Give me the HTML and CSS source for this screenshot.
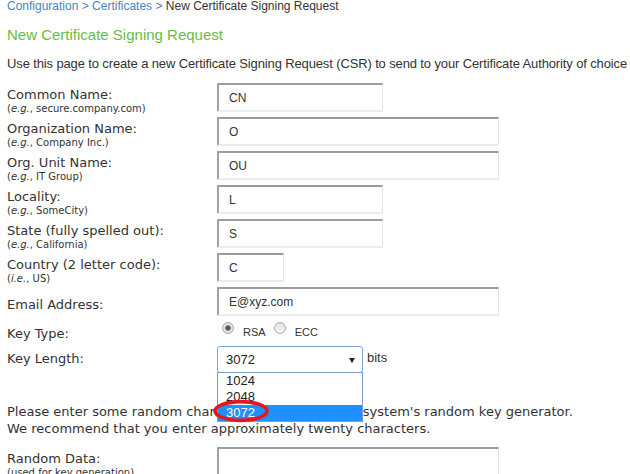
FILE: index.html
```html
<!DOCTYPE html>
<html lang="en">
<head>
<meta charset="utf-8">
<title>New Certificate Signing Request</title>
<link rel="stylesheet" href="styles.css">
</head>
<body>
<div class="page">
  <div class="crumb"><a class="crumb-link">Configuration</a> &gt; <a class="crumb-link">Certificates</a> &gt; <span class="crumb-cur">New Certificate Signing Request</span></div>
  <h1 class="title">New Certificate Signing Request</h1>
  <p class="intro">Use this page to create a new Certificate Signing Request (CSR) to send to your Certificate Authority of choice</p>

  <div class="form">
    <div class="row">
      <div class="lbl"><div class="name">Common Name:</div><div class="hint">(<i>e.g.</i>, secure.company.com)</div></div>
      <div class="field"><input class="txt w-md" type="text" value="CN"></div>
    </div>
    <div class="row">
      <div class="lbl"><div class="name">Organization Name:</div><div class="hint">(<i>e.g.</i>, Company Inc.)</div></div>
      <div class="field"><input class="txt w-lg" type="text" value="O"></div>
    </div>
    <div class="row">
      <div class="lbl"><div class="name">Org. Unit Name:</div><div class="hint">(<i>e.g.</i>, IT Group)</div></div>
      <div class="field"><input class="txt w-lg" type="text" value="OU"></div>
    </div>
    <div class="row">
      <div class="lbl"><div class="name">Locality:</div><div class="hint">(<i>e.g.</i>, SomeCity)</div></div>
      <div class="field"><input class="txt w-md" type="text" value="L"></div>
    </div>
    <div class="row">
      <div class="lbl"><div class="name">State (fully spelled out):</div><div class="hint">(<i>e.g.</i>, California)</div></div>
      <div class="field"><input class="txt w-md" type="text" value="S"></div>
    </div>
    <div class="row">
      <div class="lbl"><div class="name">Country (2 letter code):</div><div class="hint">(<i>i.e.</i>, US)</div></div>
      <div class="field"><input class="txt w-sm" type="text" value="C"></div>
    </div>
    <div class="row">
      <div class="lbl lbl-solo"><div class="name">Email Address:</div></div>
      <div class="field"><input class="txt w-lg" type="text" value="E@xyz.com"></div>
    </div>
    <div class="row row-type">
      <div class="lbl lbl-type"><div class="name">Key Type:</div></div>
      <div class="field radios">
        <input class="radio" type="radio" name="kt" checked><span class="rlabel">RSA</span>
        <input class="radio radio-2" type="radio" name="kt"><span class="rlabel">ECC</span>
      </div>
    </div>
    <div class="row row-len">
      <div class="lbl lbl-len"><div class="name">Key Length:</div></div>
      <div class="field lenfield">
        <div class="select-wrap">
          <div class="select"><span class="select-val">3072</span><span class="select-arrow"></span></div>
          <div class="options">
            <div class="opt">1024</div>
            <div class="opt">2048</div>
            <div class="opt opt-on">3072</div>
          </div>
          <svg class="circle" width="60" height="26" viewBox="0 0 60 26"><ellipse cx="29" cy="12" rx="26" ry="9.4" fill="none" stroke="#e8141f" stroke-width="3.6"/></svg>
        </div>
        <span class="bits">bits</span>
      </div>
    </div>
  </div>

  <p class="note">Please enter some random characters to re-seed your system's random key generator.<br>We recommend that you enter approximately twenty characters.</p>

  <div class="form">
    <div class="row">
      <div class="lbl"><div class="name">Random Data:</div><div class="hint">(used for key generation)</div></div>
      <div class="field"><textarea class="txt w-lg area"></textarea></div>
    </div>
  </div>
</div>
</body>
</html>
```

FILE: styles.css
```css
html, body {
  margin: 0;
  padding: 0;
  overflow: hidden;
  background: #fff;
}

.page {
  padding: 0 0 0 7px;
  font-family: "DejaVu Sans", Verdana, sans-serif;
  color: #333;
}

.crumb {
  font-family: "Liberation Sans", Arial, sans-serif;
  font-size: 12px;
  line-height: 14px;
  margin-top: -1.5px;
  color: #4a83c4;
  white-space: nowrap;
}
.crumb-link { color: #4a83c4; text-decoration: none; }
.crumb-cur { color: #333; }

.title {
  font-family: "Liberation Sans", Arial, sans-serif;
  font-weight: normal;
  font-size: 15px;
  line-height: 18px;
  color: #67bd46;
  margin: 13.5px 0 0 0;
}

.intro {
  font-family: "Liberation Sans", Arial, sans-serif;
  font-size: 13px;
  line-height: 15px;
  letter-spacing: -0.13px;
  color: #333;
  margin: 11.5px 0 0 0;
  white-space: nowrap;
}

.form { margin-top: 10.5px; }

.row {
  display: grid;
  grid-template-columns: 210px 1fr;
  height: 34px;
}

.lbl { padding-top: 5.5px; }
.name {
  font-size: 13px;
  line-height: 16px;
  white-space: nowrap;
}
.hint {
  font-size: 10px;
  line-height: 11px;
  white-space: nowrap;
}
.lbl-solo { padding-top: 12px; }

.field { padding-top: 2px; }

.txt {
  box-sizing: border-box;
  height: 29px;
  margin: 0;
  padding: 0 0 0 10px;
  border-style: solid;
  border-width: 2px 1px 2px 2px;
  border-color: #9c9c9c #e4e4e4 #ececec #a3a3a3;
  border-radius: 1px;
  font-family: "Liberation Sans", Arial, sans-serif;
  font-size: 12px;
  color: #333;
  background: #fff;
  outline: none;
  display: block;
}
.w-md { width: 166px; }
.w-lg { width: 282px; }
.w-sm { width: 67px; }
.area { height: 40px; resize: none; }

/* key type */
.row-type { height: 24px; }
.lbl-type { padding-top: 6.5px; }
.radios {
  display: flex;
  align-items: flex-start;
  padding-top: 3px;
}
.radio {
  appearance: none;
  -webkit-appearance: none;
  box-sizing: border-box;
  width: 12px;
  height: 12px;
  margin: 0 0 0 5px;
  border-radius: 50%;
  border: 1px solid #a9a9a9;
  background: linear-gradient(#e2e2e2, #f8f8f8);
}
.radio:checked {
  background: radial-gradient(circle, #5a5a5a 0, #5a5a5a 2.3px, #dcdcdc 3px, #f4f4f4 100%);
}
.radio-2 { margin-left: 8px; }
.rlabel {
  font-family: "Liberation Sans", Arial, sans-serif;
  font-size: 11px;
  line-height: 13px;
  color: #333;
  margin: 4px 0 0 9px;
}

/* key length */
.row-len { height: 34px; }
.lbl-len { padding-top: 7.5px; }
.lenfield {
  display: flex;
  align-items: flex-start;
  padding-top: 3px;
}
.select-wrap {
  position: relative;
  width: 146px;
}
.select {
  box-sizing: border-box;
  height: 27px;
  border: 1px solid #7fa7df;
  border-radius: 3px;
  display: flex;
  align-items: center;
  padding: 0 0 0 8px;
  font-family: "Liberation Sans", Arial, sans-serif;
  font-size: 13px;
  color: #222;
  background: #fff;
}
.select-val { flex: 1; }
.select-arrow {
  width: 0;
  height: 0;
  border-left: 3px solid transparent;
  border-right: 3px solid transparent;
  border-top: 5px solid #222;
  margin: 1px 7px 0 0;
}
.options {
  position: absolute;
  left: 0;
  top: 26px;
  width: 146px;
  box-sizing: border-box;
  border: 1px solid #7f9ccb;
  background: #fff;
  z-index: 2;
  font-family: "Liberation Sans", Arial, sans-serif;
  font-size: 13px;
  color: #222;
}
.opt {
  height: 16px;
  line-height: 16px;
  padding-left: 8px;
}
.opt-on {
  background: #1e90ff;
  color: #fff;
}
.circle {
  position: absolute;
  left: -5px;
  top: 53px;
  z-index: 3;
}
.bits {
  font-family: "Liberation Sans", Arial, sans-serif;
  font-size: 13px;
  line-height: 15px;
  color: #333;
  margin: 4px 0 0 4px;
}

.note {
  font-size: 13px;
  line-height: 17px;
  margin: 26px 0 0 0;
  white-space: nowrap;
}
.note + .form { margin-top: 8px; }
```
